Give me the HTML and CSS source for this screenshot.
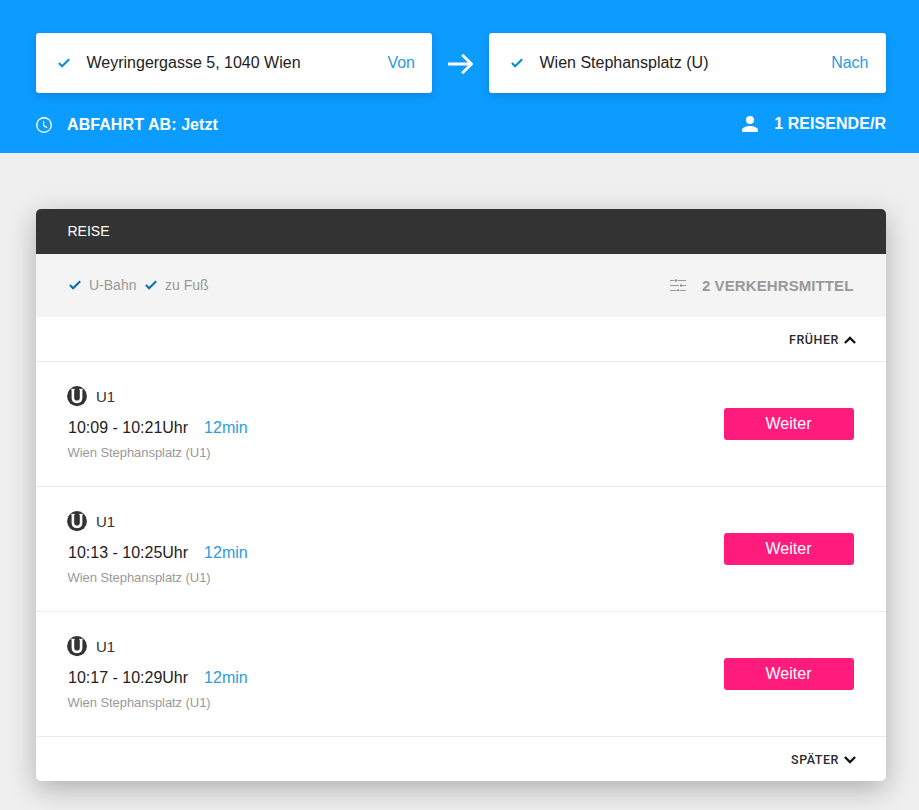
FILE: index.html
```html
<!DOCTYPE html>
<html lang="de">
<head>
<meta charset="utf-8">
<title>Reise</title>
<link rel="stylesheet" href="styles.css">
</head>
<body>
<svg class="defs" width="0" height="0" aria-hidden="true">
  <symbol id="check" viewBox="0 0 12 10"><path d="M.9 5.1 4.1 8.3 11.2 1.2" fill="none" stroke="currentColor" stroke-width="2.1"/></symbol>
  <symbol id="ubahn" viewBox="0 0 20 21"><ellipse cx="10" cy="10.2" rx="9.9" ry="10.1" fill="#333"/><path d="M5.9 3v8.8c0 2.8 1.4 4.1 4.1 4.1s4.1-1.3 4.1-4.1V3" fill="none" stroke="#fff" stroke-width="2.6"/><path d="M3.8 3.3H8M12 3.3h4.2" stroke="#fff" stroke-width=".7"/></symbol>
</svg>
<header class="search">
  <div class="route">
    <div class="field"><svg class="check"><use href="#check"/></svg><span class="place">Weyringergasse 5, 1040 Wien</span><span class="hint">Von</span></div>
    <svg class="arrow" viewBox="0 0 26 22"><path d="M0 11h24M14.2 1.7 23.5 11l-9.3 9.3" fill="none" stroke="#fff" stroke-width="2.8"/></svg>
    <div class="field"><svg class="check"><use href="#check"/></svg><span class="place">Wien Stephansplatz (U)</span><span class="hint">Nach</span></div>
  </div>
  <div class="options">
    <div class="option departure"><svg class="clock" viewBox="0 0 16 16"><circle cx="8" cy="8" r="7.25" fill="none" stroke="#fff" stroke-width="1.4"/><path d="M7.6 4v4.6l3.5 2.1" fill="none" stroke="#fff" stroke-width="1.2"/></svg><span>ABFAHRT AB: Jetzt</span></div>
    <div class="option travellers"><svg class="person" viewBox="4 4 16 16"><path d="M12 12a4 4 0 1 0 0-8 4 4 0 0 0 0 8zm0 2c-2.67 0-8 1.34-8 4v2h16v-2c0-2.66-5.33-4-8-4z" fill="#fff"/></svg><span>1 REISENDE/R</span></div>
  </div>
</header>
<main class="card">
  <h1 class="title">REISE</h1>
  <div class="filters">
    <svg class="check"><use href="#check"/></svg><span class="mode">U-Bahn</span>
    <svg class="check"><use href="#check"/></svg><span class="mode">zu Fuß</span>
    <div class="modes"><svg class="sliders" viewBox="0 0 16 12"><path d="M0 1.5h4.5M7.5 1.5H16M0 6.5h9M12 6.5h4M0 11.5h6.5M9.5 11.5H16" fill="none" stroke="#999"/><path d="M5 1.5h2M10 6.5h2M7 11.5h2" stroke="#888" stroke-width="2"/></svg><span>2 VERKEHRSMITTEL</span></div>
  </div>
  <div class="shift earlier"><span>FRÜHER</span><svg class="chevron" viewBox="0 0 12 8"><path d="M.9 7 6 1.9 11.1 7" fill="none" stroke="#111" stroke-width="2.3"/></svg></div>
  <section class="trip">
    <div class="info">
      <div class="line"><svg class="ubahn"><use href="#ubahn"/></svg><span>U1</span></div>
      <div class="time"><span>10:09 - 10:21Uhr</span><span class="duration">12min</span></div>
      <div class="stop">Wien Stephansplatz (U1)</div>
    </div>
    <button class="next">Weiter</button>
  </section>
  <section class="trip">
    <div class="info">
      <div class="line"><svg class="ubahn"><use href="#ubahn"/></svg><span>U1</span></div>
      <div class="time"><span>10:13 - 10:25Uhr</span><span class="duration">12min</span></div>
      <div class="stop">Wien Stephansplatz (U1)</div>
    </div>
    <button class="next">Weiter</button>
  </section>
  <section class="trip">
    <div class="info">
      <div class="line"><svg class="ubahn"><use href="#ubahn"/></svg><span>U1</span></div>
      <div class="time"><span>10:17 - 10:29Uhr</span><span class="duration">12min</span></div>
      <div class="stop">Wien Stephansplatz (U1)</div>
    </div>
    <button class="next">Weiter</button>
  </section>
  <div class="shift later"><span>SPÄTER</span><svg class="chevron" viewBox="0 0 12 8"><path d="M.9 1 6 6.1 11.1 1" fill="none" stroke="#111" stroke-width="2.3"/></svg></div>
</main>
</body>
</html>
```

FILE: styles.css
```css
* { box-sizing: border-box; }
body {
  margin: 0;
  height: 810px;
  overflow: hidden;
  background: #efefef;
  color: #222;
  font-family: "Liberation Sans", Arial, sans-serif;
  font-size: 16px;
}
svg { display: block; flex: none; }
.defs { position: absolute; }
.check { width: 12px; height: 10px; color: #0e8ec9; }

.search {
  height: 153px;
  padding: 33px 33px 0 36px;
  background: #0c9bff;
}
.route { display: flex; align-items: center; }
.field {
  display: flex;
  align-items: center;
  width: 396px;
  height: 60px;
  padding: 0 17px 0 22px;
  background: #fff;
  border-radius: 3px;
  box-shadow: 0 3px 9px rgba(0, 0, 0, .13);
}
.field:last-child { width: 397px; padding-right: 17.5px; }
.place { margin-left: 16.5px; }
.hint { margin-left: auto; color: #2b9bdc; }
.arrow { width: 26px; height: 22px; margin: 2px 15px 0 16px; }
.options {
  display: flex;
  justify-content: space-between;
  width: 850px;
  margin-top: 21px;
  color: #fff;
  font-weight: bold;
  line-height: 18px;
}
.option { display: flex; align-items: center; }
.departure { margin-top: 2px; }
.departure span { margin-left: 15px; letter-spacing: .08px; }
.travellers span { margin-left: 16px; letter-spacing: .05px; }
.clock { width: 16px; height: 16px; }
.person { width: 16px; height: 16px; margin-bottom: 1px; }

.card {
  width: 850px;
  margin: 56px 0 0 36px;
  overflow: hidden;
  background: #fff;
  border-radius: 5px;
  box-shadow: 0 8px 28px rgba(0, 0, 0, .27);
}
.title {
  height: 45px;
  margin: 0;
  padding-left: 31.5px;
  background: #333;
  color: #fff;
  font-size: 14px;
  font-weight: normal;
  line-height: 45px;
}
.filters {
  display: flex;
  align-items: center;
  height: 63px;
  padding: 0 32.5px 1px 33px;
  background: #f4f4f4;
  color: #999;
  font-size: 14px;
}
.filters .check { color: #0b72b0; }
.mode { margin: 0 8.5px 0 8px; }
.modes { display: flex; align-items: center; margin-left: auto; padding-top: 1px; font-size: 15px; font-weight: bold; letter-spacing: .1px; }
.sliders { width: 16px; height: 12px; margin: 0 16px 1px 0; }
.shift {
  display: flex;
  align-items: center;
  justify-content: flex-end;
  height: 44px;
  padding-right: 30px;
  color: #2b2b2b;
  font-family: Roboto, sans-serif;
  font-size: 12.5px;
  font-weight: 500;
  letter-spacing: .55px;
}
.earlier { height: 45px; border-bottom: 1px solid #ebebeb; }
.chevron { width: 12px; height: 8px; margin: 2px 0 0 5px; }
.trip {
  display: flex;
  justify-content: space-between;
  align-items: center;
  height: 125px;
  padding: 0 32px 0 31px;
  border-bottom: 1px solid #ebebeb;
}
.info { height: 76px; }
.line { display: flex; align-items: center; height: 21px; font-size: 15px; color: #333; }
.line span { margin-left: 9px; }
.ubahn { width: 20px; height: 21px; }
.time { margin: 12px 0 0 1px; line-height: 18px; }
.duration { margin-left: 16px; color: #2b9bdc; }
.stop { margin: 8px 0 0 .5px; color: #999; font-size: 13px; line-height: 15px; letter-spacing: -.06px; }
.next {
  width: 130px;
  height: 32px;
  padding: 0 1px 0 0;
  border: 0;
  border-radius: 3px;
  background: #ff1c7d;
  color: #fff;
  font: 16px/30px "Liberation Sans", Arial, sans-serif;
}
```
